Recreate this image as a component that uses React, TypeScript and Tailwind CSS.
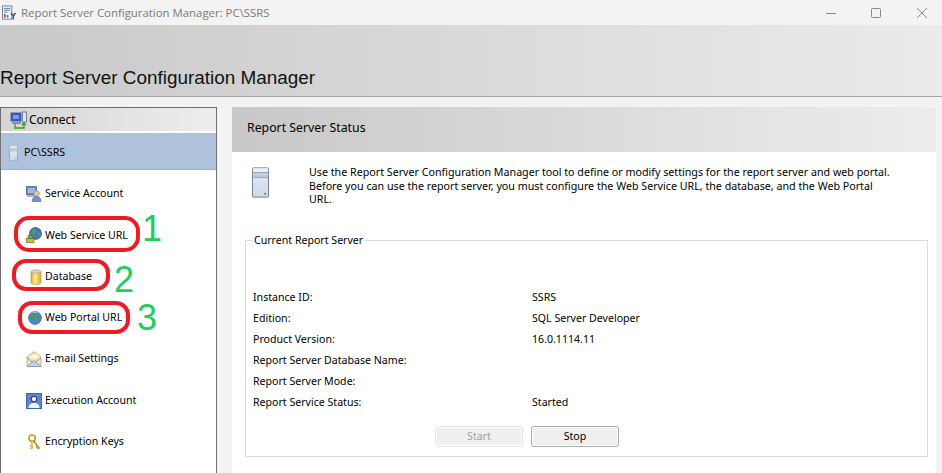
const TAHOMA = "font-['Noto_Sans',sans-serif]";

function ServerIcon({ className }: { className?: string }) {
  return (
    <svg viewBox="0 0 18 32" className={className}>
      <defs>
        <linearGradient id="srv" x1="0" x2="0" y1="0" y2="1">
          <stop offset="0" stopColor="#e6ebf5" />
          <stop offset="1" stopColor="#cfd9ec" />
        </linearGradient>
      </defs>
      <rect x="0.5" y="0.5" width="17" height="31" rx="1" fill="url(#srv)" stroke="#6f7c90" />
      <rect x="1" y="1" width="16" height="4" fill="#eef2f8" />
      <line x1="1" y1="5.5" x2="17" y2="5.5" stroke="#8e98a8" />
      <rect x="1" y="6" width="16" height="4" fill="#c3cee2" />
      <line x1="1" y1="10.5" x2="17" y2="10.5" stroke="#8e98a8" />
      <rect x="13" y="27" width="2" height="2" fill="#35b04a" />
    </svg>
  );
}

function ConnectIcon() {
  return (
    <svg viewBox="0 0 18 18" className="w-[18px] h-[18px]">
      <rect x="1" y="2" width="10" height="8" fill="#2f55d4" stroke="#55607a" strokeWidth="1" />
      <rect x="3" y="4" width="6" height="4" fill="#6fa0f0" />
      <rect x="2" y="11" width="9" height="2" fill="#8a92a4" />
      <rect x="12.5" y="1" width="4" height="10" fill="#dfe4ee" stroke="#75809a" strokeWidth="1" />
      <path d="M5 13v4h9v-4" fill="none" stroke="#2f9a20" strokeWidth="1.3" />
      <path d="M12 14l2-2 2 2" fill="none" stroke="#2f9a20" strokeWidth="1.3" />
    </svg>
  );
}

function ServiceAccountIcon() {
  return (
    <svg viewBox="0 0 16 16" className="w-4 h-4">
      <rect x="0.5" y="0.5" width="10" height="8" fill="#6d8fd8" stroke="#6a7488" />
      <rect x="2" y="2" width="7" height="5" fill="#9db8ea" />
      <rect x="1" y="9" width="9" height="2" fill="#aab2c0" />
      <circle cx="10.5" cy="7.500" r="2.800" fill="#e8c6a0" stroke="#8b6f55" strokeWidth="0.6" />
      <path d="M6 15.500c0-3.400 2-5 4.500-5s4.500 1.600 4.500 5z" fill="#6f93c4" stroke="#46658f" strokeWidth="0.6" />
    </svg>
  );
}

function WebServiceIcon() {
  return (
    <svg viewBox="0 0 16 16" className="w-4 h-4">
      <circle cx="9.5" cy="6.5" r="6" fill="#3f78c9" stroke="#2a4f85" strokeWidth="0.7" />
      <path d="M6 3l3-1.200 1.500 2-2 1.500.5 2.500-2 1-1.500-3zM11.500 6l3-.5-.5 3-2 1.500z" fill="#5c9a4a" />
      <rect x="0.5" y="11.500" width="7.500" height="4" fill="#d9b53c" stroke="#7f6a1e" strokeWidth="0.7" />
      <rect x="2" y="8.500" width="4.500" height="3" fill="#79a64c" stroke="#4d6e2e" strokeWidth="0.6" />
    </svg>
  );
}

function DatabaseIcon() {
  return (
    <svg viewBox="0 0 12 16" className="w-3 h-4">
      <defs>
        <linearGradient id="dbg" x1="0" x2="1" y1="0" y2="0">
          <stop offset="0" stopColor="#d6a51f" />
          <stop offset="0.4" stopColor="#ffee94" />
          <stop offset="1" stopColor="#dcaa22" />
        </linearGradient>
      </defs>
      <path d="M1 2.500v11c0 1 2.200 2 5 2s5-1 5-2v-11z" fill="url(#dbg)" stroke="#b3953f" strokeWidth="0.6" />
      <ellipse cx="6" cy="2.500" rx="5" ry="1.800" fill="#d8d4c0" stroke="#a59f86" strokeWidth="0.6" />
    </svg>
  );
}

function GlobeIcon() {
  return (
    <svg viewBox="0 0 14 14" className="w-[14px] h-[14px]">
      <circle cx="7" cy="7" r="6.5" fill="#4b86d6" stroke="#2d5a9a" strokeWidth="0.6" />
      <path d="M3 3.200l3-1.500 2 1.300-1.500 2 1.200 2.400-1.500 2.400L4.500 8 2 6.500zM9.500 6l3-1 .5 3-2 2.500-1-1.500z" fill="#4f9a4a" />
      <path d="M4.500 1.800c1.500-.8 3.500-.8 5 0" fill="none" stroke="#cfe3fb" strokeWidth="0.8" />
    </svg>
  );
}

function MailIcon() {
  return (
    <svg viewBox="0 0 16 16" className="w-4 h-4">
      <path d="M1 6l7-5.500 7 5.500v9.500H1z" fill="#f4e3b0" stroke="#b79f6a" strokeWidth="0.7" />
      <rect x="4" y="4" width="8" height="3" fill="#fff" />
      <path d="M1 15.500l7-6 7 6z" fill="#bcd3ee" stroke="#6f8fb8" strokeWidth="0.7" />
      <path d="M1 7l6 4.500M15 7l-6 4.500" stroke="#6f8fb8" strokeWidth="0.8" fill="none" />
    </svg>
  );
}

function ExecutionIcon() {
  return (
    <svg viewBox="0 0 16 16" className="w-4 h-4">
      <rect width="16" height="16" fill="#5a86d2" />
      <rect x="0.5" y="0.5" width="15" height="15" fill="none" stroke="#3d66b0" />
      <path d="M2.500 15c0-3.500 2.200-5 5.500-5s5.500 1.500 5.500 5z" fill="#f2f4f8" />
      <circle cx="8" cy="6" r="2.800" fill="#f5f2ee" stroke="#1f2a44" strokeWidth="1" />
    </svg>
  );
}

function KeysIcon() {
  return (
    <svg viewBox="0 0 14 16" className="w-[14px] h-4">
      <circle cx="4.200" cy="4.200" r="3.200" fill="none" stroke="#c79a22" strokeWidth="1.600" />
      <path d="M5.500 7l6 7.500M9.500 12l-1.500 1.500M11 14l-1.500 1" stroke="#b98c18" strokeWidth="1.500" fill="none" />
      <path d="M3.500 7.500l1 7M4 11.500l-2 .5M4.300 14l-2 .5" stroke="#d9b03c" strokeWidth="1.300" fill="none" />
    </svg>
  );
}

function AppIcon() {
  return (
    <svg viewBox="0 0 16 16" className="w-[15px] h-4">
      <rect x="0.500" y="0.500" width="10" height="14" fill="#fff" stroke="#6d7891" />
      <path d="M2 3h7M2 5h7M2 7h4" stroke="#4a6fb5" strokeWidth="1" />
      <rect x="2" y="9" width="2" height="4" fill="#d9432f" />
      <rect x="5" y="10" width="2" height="3" fill="#3a7bd5" />
      <path d="M9.500 8l2.500 3 2.500-3M12 11v4" stroke="#37507f" strokeWidth="1.500" fill="none" />
    </svg>
  );
}

const navItems = [
  { label: "Service Account", icon: <ServiceAccountIcon /> },
  { label: "Web Service URL", icon: <WebServiceIcon /> },
  { label: "Database", icon: <DatabaseIcon /> },
  { label: "Web Portal URL", icon: <GlobeIcon /> },
  { label: "E-mail Settings", icon: <MailIcon /> },
  { label: "Execution Account", icon: <ExecutionIcon /> },
  { label: "Encryption Keys", icon: <KeysIcon /> },
];

const statusRows = [
  ["Instance ID:", "SSRS"],
  ["Edition:", "SQL Server Developer"],
  ["Product Version:", "16.0.1114.11"],
  ["Report Server Database Name:", ""],
  ["Report Server Mode:", ""],
  ["Report Service Status:", "Started"],
];

export default function App() {
  return (
    <div className={`relative w-[942px] h-[473px] overflow-hidden bg-[#f3f3f3] text-[10.6px] text-black ${TAHOMA}`}>
      {/* title bar */}
      <div className="h-[25px] flex items-center pl-[2px]">
        <AppIcon />
        <span className="ml-1 text-[11.4px] text-[#7a7a7a] font-['Open_Sans',sans-serif]">
          Report Server Configuration Manager: PC\SSRS
        </span>
        <div className="ml-auto flex items-center text-[#8a8a8a]">
          <svg viewBox="0 0 12 12" className="w-3 h-3 mr-[33px]">
            <line x1="1" y1="6.500" x2="11" y2="6.500" stroke="currentColor" />
          </svg>
          <svg viewBox="0 0 12 12" className="w-3 h-3 mr-[34px]">
            <rect x="1.500" y="1.500" width="9" height="9" rx="1" fill="none" stroke="currentColor" />
          </svg>
          <svg viewBox="0 0 12 12" className="w-3 h-3 mr-[14px]">
            <path d="M1 1l10 10M11 1L1 11" stroke="currentColor" fill="none" />
          </svg>
        </div>
      </div>

      {/* banner */}
      <div className="h-[72px] flex items-end pb-[6px] bg-gradient-to-r from-[#c9c9c9] to-[#ebebeb] border-b border-[#a6a6a6]">
        <h1 className="text-[18.9px] leading-6 text-[#111] font-['Liberation_Sans',sans-serif]">
          Report Server Configuration Manager
        </h1>
      </div>

      <div className="flex mt-[10px] h-[366px]">
        {/* left nav */}
        <div className="w-[217px] shrink-0 bg-white border border-b-0 border-[#6f6f6f]">
          <div className="h-[23px] flex items-center pl-[9px] gap-[1px] bg-gradient-to-r from-[#d4d4d4] to-[#eeeeee]">
            <ConnectIcon />
            <span className="text-[12px]">Connect</span>
          </div>
          <div className="h-[37px] mt-[2px] pt-[4px] flex items-center pl-[8px] gap-[6px] bg-[#aec2dc] border-b border-[#9fb2cb]">
            <ServerIcon className="w-[9px] h-[15px]" />
            <span>PC\SSRS</span>
          </div>
          <div className="pt-[3.500px]">
            {navItems.map((item) => (
              <div key={item.label} className="h-[41.300px] flex items-center">
                <div className="w-[44px] shrink-0 flex justify-end pr-[3px]">{item.icon}</div>
                <span>{item.label}</span>
              </div>
            ))}
          </div>
        </div>

        {/* right content */}
        <div className="ml-[15px] w-[704px] flex flex-col">
          <div className="h-[45px] shrink-0 flex items-center pl-[15px] pb-[2px] text-[12.3px] bg-gradient-to-r from-[#c8c8c8] to-[#ededed]">
            Report Server Status
          </div>
          <div className="flex-1 bg-white pl-[13px] pr-[8px]">
            <div className="flex pt-[14px] h-[76px]">
              <ServerIcon className="w-[17px] h-[31px] ml-[7px] mt-[1px] shrink-0" />
              <p className="ml-[40px] w-[584px] text-[10.7px] leading-[13.500px]">
                Use the Report Server Configuration Manager tool to define or modify settings for the report server and web portal.
                Before you can use the report server, you must configure the Web Service URL, the database, and the Web Portal URL.
              </p>
            </div>
            {/* group box */}
            <div className="relative h-[217px] border border-[#dcdcdc] mt-[12px]">
              <span className="absolute left-[7px] top-[-8px] bg-white px-[1px] leading-[14px]">Current Report Server</span>
              <div className="pt-[46px] pl-[7px]">
                {statusRows.map(([k, v]) => (
                  <div key={k} className="grid grid-cols-[279px_1fr] h-[21px] items-center">
                    <span>{k}</span>
                    <span>{v}</span>
                  </div>
                ))}
              </div>
              <div className="flex gap-[8px] pl-[189px] pt-[13px]">
                <button className="w-[88px] h-[21px] rounded-[3px] bg-[#efefef] border border-[#e3e3e3] text-[#a0a0a0] ring-1 ring-inset ring-white">
                  Start
                </button>
                <button className="w-[88px] h-[21px] rounded-[3px] bg-[#efefef] border border-[#adadad] ring-1 ring-inset ring-white">
                  Stop
                </button>
              </div>
            </div>
          </div>
        </div>
      </div>

      {/* hand-drawn annotations */}
      <div className="absolute left-[14px] top-[216px] w-[126px] h-[36px] rounded-[15px] border-[4px] border-[#ed1c24]" />
      <div className="absolute left-[12px] top-[259px] w-[98px] h-[32px] rounded-[14px] border-[4px] border-[#ed1c24]" />
      <div className="absolute left-[18px] top-[301px] w-[112px] h-[33px] rounded-[14px] border-[4px] border-[#ed1c24]" />
      <span className="absolute left-[142px] top-[207px] text-[36px] leading-[44px] text-[#22cc5e] font-['Liberation_Sans',sans-serif]">1</span>
      <span className="absolute left-[114px] top-[258px] text-[36px] leading-[44px] text-[#22cc5e] font-['Liberation_Sans',sans-serif]">2</span>
      <span className="absolute left-[137px] top-[296px] text-[36px] leading-[44px] text-[#22cc5e] font-['Liberation_Sans',sans-serif]">3</span>
    </div>
  );
}
